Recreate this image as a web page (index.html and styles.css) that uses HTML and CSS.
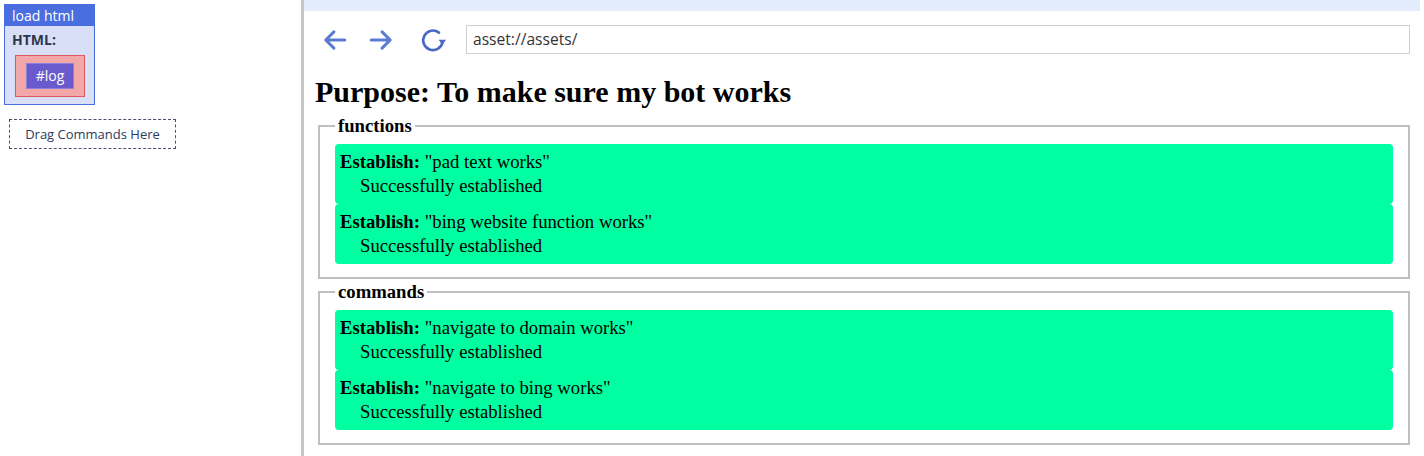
FILE: index.html
```html
<!DOCTYPE html>
<html>
<head>
<meta charset="utf-8">
<link rel="stylesheet" href="styles.css">
</head>
<body>
<div class="left">
  <div class="block">
    <div class="block-head">load html</div>
    <div class="block-body">
      <div class="block-label">HTML:</div>
      <div class="slot">
        <div class="chip">#log</div>
      </div>
    </div>
  </div>
  <div class="drop">Drag Commands Here</div>
</div>
<div class="right">
  <div class="topbar"></div>
  <div class="nav">
    <svg class="icon" viewBox="0 0 24 24" width="26" height="26"><path d="M21 12H4M11 4.5L3.5 12L11 19.5" fill="none" stroke="#5b7bd3" stroke-width="2.8" stroke-linecap="round" stroke-linejoin="round"/></svg>
    <svg class="icon" viewBox="0 0 24 24" width="26" height="26"><path d="M3 12H20M13 4.5L20.5 12L13 19.5" fill="none" stroke="#5b7bd3" stroke-width="2.8" stroke-linecap="round" stroke-linejoin="round"/></svg>
    <svg class="icon reload" viewBox="0 0 24 24" width="26" height="26"><path d="M17.5 5.2A9 9 0 1 0 20.8 14" fill="none" stroke="#4a67c6" stroke-width="2.4" stroke-linecap="round"/><path d="M17.2 11.8L24 11.8L20.6 16.6Z" fill="#4a67c6"/></svg>
    <div class="url">asset://assets/</div>
  </div>
  <div class="content">
    <h1 class="title">Purpose: To make sure my bot works</h1>
    <fieldset class="group">
      <legend>functions</legend>
      <div class="item"><b>Establish:</b> "pad text works"<div class="status">Successfully established</div></div>
      <div class="item"><b>Establish:</b> "bing website function works"<div class="status">Successfully established</div></div>
    </fieldset>
    <fieldset class="group">
      <legend>commands</legend>
      <div class="item"><b>Establish:</b> "navigate to domain works"<div class="status">Successfully established</div></div>
      <div class="item"><b>Establish:</b> "navigate to bing works"<div class="status">Successfully established</div></div>
    </fieldset>
  </div>
</div>
</body>
</html>
```
FILE: styles.css
```css
html, body {
  margin: 0;
  padding: 0;
  height: 456px;
  overflow: hidden;
  background: #fff;
}
body {
  display: flex;
}
.left {
  width: 301px;
  flex: none;
  padding: 4px 0 0 4px;
  box-sizing: border-box;
  font-family: "Open Sans", "Noto Sans", sans-serif;
}
.block {
  width: 91px;
  border: 1px solid #4a6ee0;
  box-sizing: border-box;
  background: #d8dff6;
}
.block-head {
  background: #4a6ee0;
  color: #fff;
  font-size: 14px;
  line-height: 21px;
  height: 21px;
  padding-left: 7px;
}
.block-body {
  padding: 6px 0 7px 7px;
}
.block-label {
  font-weight: bold;
  color: #2e3550;
  font-size: 14px;
  line-height: 16px;
}
.slot {
  margin: 7px 0 0 3px;
  width: 70px;
  height: 42px;
  box-sizing: border-box;
  background: #f3a7a8;
  border: 1px solid #e0575d;
  padding: 7px 0 0 10px;
}
.chip {
  width: 48px;
  height: 26px;
  box-sizing: border-box;
  background: #6a5acd;
  border: 1px solid #8b80dc;
  color: #fff;
  font-size: 14px;
  line-height: 24px;
  text-align: center;
}
.drop {
  margin: 14px 0 0 5px;
  width: 167px;
  height: 30px;
  box-sizing: border-box;
  border: 1px dashed #4a5068;
  font-size: 13px;
  color: #2c3a5e;
  text-align: center;
  line-height: 28px;
}
.right {
  flex: 1;
  border-left: 3px solid #c6c6c6;
  display: flex;
  flex-direction: column;
}
.topbar {
  height: 11px;
  background: #e3ecfa;
  margin-right: 4px;
}
.nav {
  display: flex;
  align-items: center;
  padding: 14px 14px 0 18px;
  height: 29px;
}
.icon {
  flex: none;
  margin-right: 20px;
}
.icon.reload {
  margin-left: 6px;
  margin-right: 20px;
}
.url {
  flex: 1;
  height: 29px;
  box-sizing: border-box;
  border: 1px solid #cfcfcf;
  font-family: "Open Sans", "Noto Sans", sans-serif;
  font-size: 15.6px;
  color: #333;
  line-height: 27px;
  padding-left: 6px;
}
.content {
  padding: 0 14px;
  font-family: "Liberation Serif", "Times New Roman", serif;
  color: #000;
}
.title {
  font-size: 30px;
  font-weight: bold;
  margin: 21px 0 6px -3px;
  line-height: 34px;
}
.group {
  margin: 0 0 2px 0;
  padding: 8px 15px 13px 15px;
  border: 2px solid #c0c0c0;
}
.group legend {
  font-size: 18.7px;
  font-weight: bold;
  padding: 0 3px;
  line-height: 21px;
}
.item {
  background: #00ffa0;
  border-radius: 4px;
  font-size: 18.7px;
  line-height: 24px;
  padding: 6px 5px;
}
.status {
  padding-left: 20px;
}
```
